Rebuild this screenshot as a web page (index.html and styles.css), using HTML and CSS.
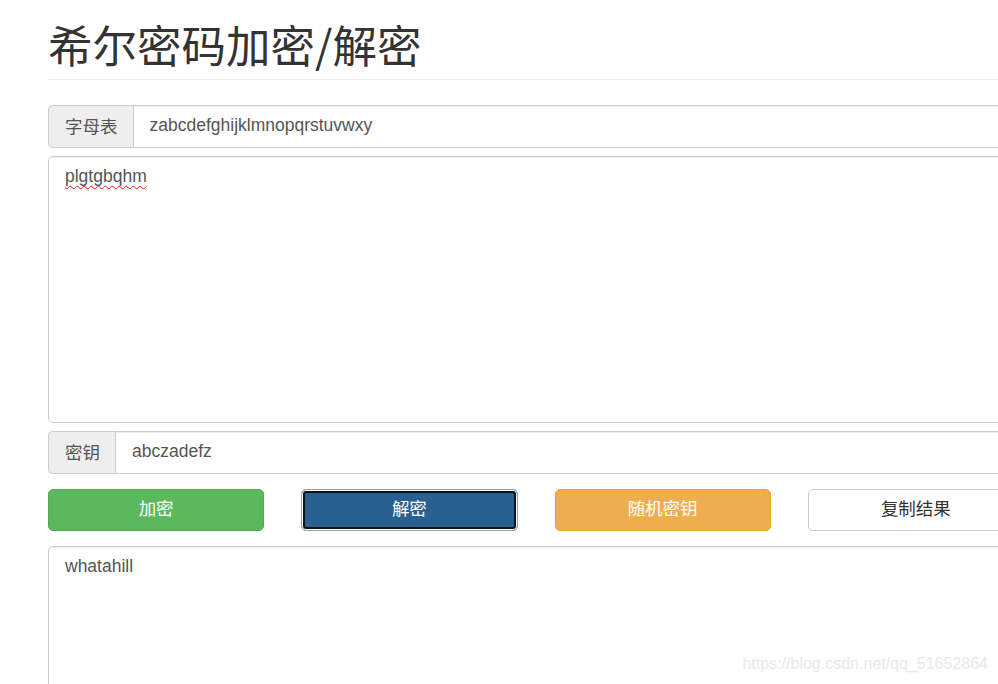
FILE: index.html
```html
<!DOCTYPE html>
<html lang="zh-CN">
<head>
  <meta charset="UTF-8" />
  <meta name="viewport" content="width=device-width, initial-scale=1.0" />
  <title>希尔密码加密/解密</title>
  <link rel="stylesheet" href="styles.css">
</head>
<body>
  <div class="container">
    <div class="page-header">
      <h1>希尔密码加密/解密</h1>
    </div>

    <div class="input-group">
      <span class="addon">字母表</span>
      <div class="form-control">zabcdefghijklmnopqrstuvwxy</div>
    </div>

    <div class="form-control text-box input-box">
      <span class="misspelled">plgtgbqhm</span>
    </div>

    <div class="input-group">
      <span class="addon">密钥</span>
      <div class="form-control">abczadefz</div>
    </div>

    <div class="btn-row">
      <button class="btn btn-success">加密</button>
      <button class="btn btn-primary focused">解密</button>
      <button class="btn btn-warning">随机密钥</button>
      <button class="btn btn-default">复制结果</button>
    </div>

    <div class="form-control text-box output-box">whatahill</div>
  </div>

  <div class="watermark">https://blog.csdn.net/qq_51652864</div>
</body>
</html>
```

FILE: styles.css
```css
html, body {
  margin: 0;
  padding: 0;
  overflow: hidden;
  height: 100%;
}

body {
  font-family: "Liberation Sans", "Noto Sans CJK SC", sans-serif;
  font-size: 17.5px;
  line-height: 1.42857;
  color: #333;
  background: #fff;
}

.container {
  width: 976px;
  margin-left: 48px;
}

.page-header {
  margin: 19px 0 25px;
  padding-bottom: 10px;
  border-bottom: 1px solid #eee;
}

.page-header h1 {
  margin: 0;
  font-family: "Noto Sans CJK SC", "Liberation Sans", sans-serif;
  font-size: 44.5px;
  font-weight: 400;
  line-height: 50px;
  color: #333;
}

.input-group {
  display: flex;
  height: 43px;
  margin-bottom: 8px;
}

.addon {
  display: flex;
  align-items: center;
  padding: 0 15px 2px 16px;
  background: #eee;
  border: 1px solid #ccc;
  border-right: 0;
  border-radius: 5px 0 0 5px;
  color: #555;
  font-family: "Noto Sans CJK SC", sans-serif;
  font-size: 17.5px;
}

.form-control {
  box-sizing: border-box;
  border: 1px solid #ccc;
  border-radius: 5px;
  background: #fff;
  color: #555;
  padding: 7px 16px;
  box-shadow: inset 0 1px 1px rgba(0, 0, 0, 0.075);
}

.input-group .form-control {
  flex: 1;
  display: flex;
  align-items: center;
  padding-bottom: 9px;
  border-radius: 0 5px 5px 0;
}

.text-box {
  padding-top: 7px;
}

.input-box {
  height: 267px;
  margin-bottom: 8px;
}

.misspelled {
  text-decoration: underline wavy #e02020;
  text-decoration-thickness: 1px;
  text-decoration-skip-ink: none;
  text-underline-offset: 3px;
}

.btn-row {
  display: grid;
  grid-template-columns: repeat(4, 1fr);
  column-gap: 37px;
  margin: 15px 0;
}

.btn {
  height: 42px;
  padding: 0 0 5px;
  border: 1px solid transparent;
  border-radius: 5px;
  font-family: "Noto Sans CJK SC", sans-serif;
  font-size: 17.5px;
  cursor: pointer;
}

.btn-success {
  background: #5cb85c;
  border-color: #4cae4c;
  color: #fff;
}

.btn-primary {
  background: #286090;
  border-color: #204d74;
  color: #fff;
}

/* focus ring drawn inside the button box */
.btn-primary.focused {
  border-color: #8fa3b8;
  box-shadow: inset 0 0 0 1px #fff, inset 0 0 0 3px #111;
}

.btn-warning {
  background: #f0ad4e;
  border-color: #eea236;
  color: #fff;
}

.btn-default {
  background: #fff;
  border-color: #ccc;
  color: #333;
}

.output-box {
  height: 200px;
}

.watermark {
  position: absolute;
  right: 10px;
  bottom: 8px;
  font-family: "Liberation Sans", sans-serif;
  font-size: 16px;
  color: #e8e8e8;
}
```
